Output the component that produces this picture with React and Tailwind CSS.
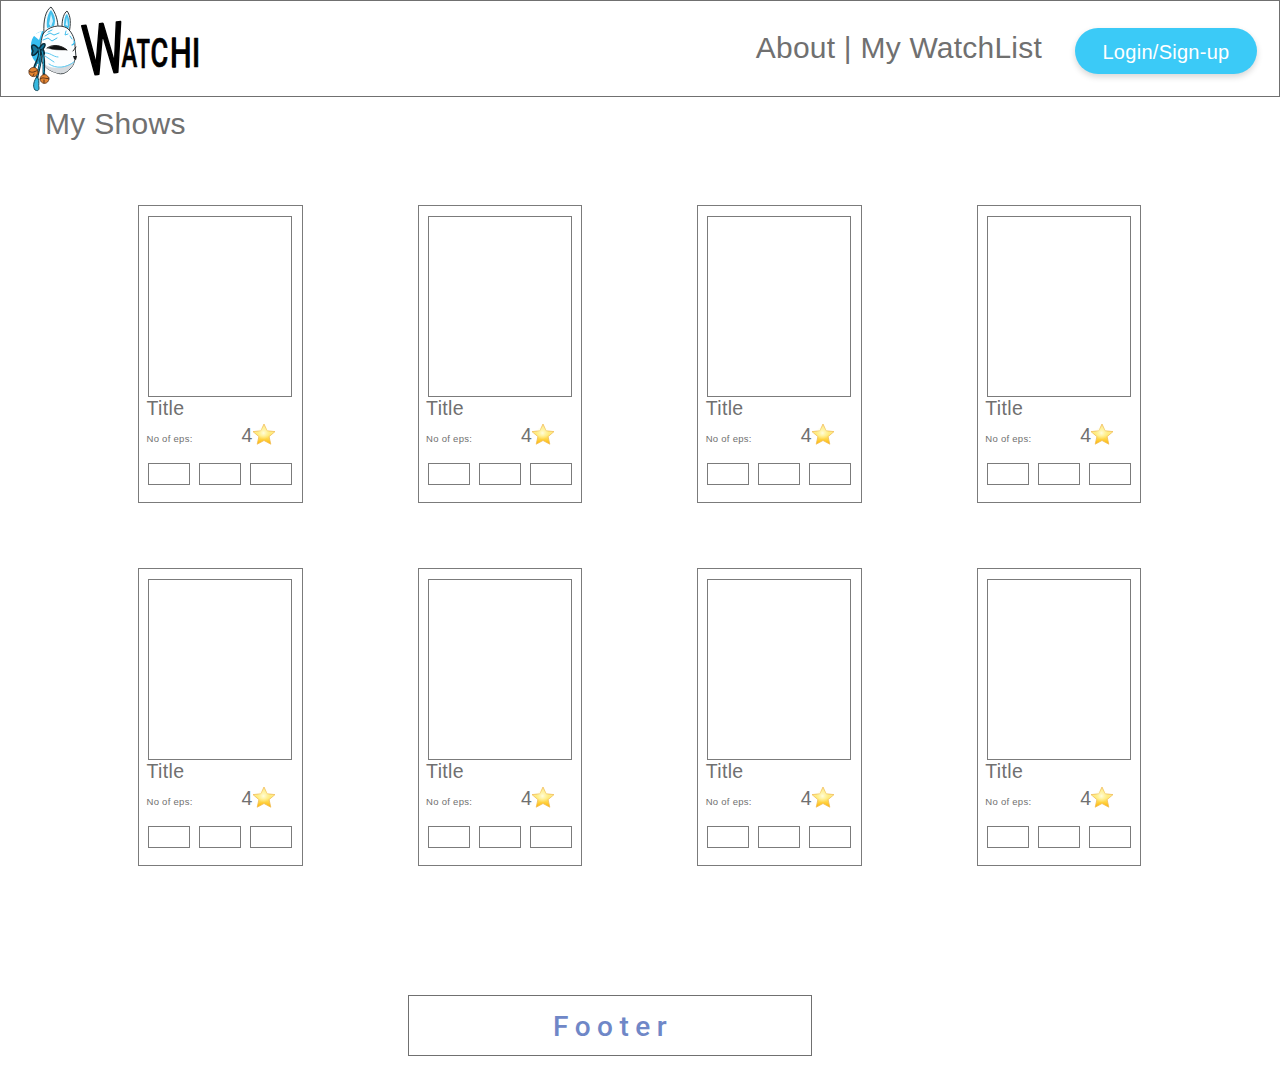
import React from "react";

function FoxMask() {
  return (
    <svg className="h-[88px] w-[52px] shrink-0" viewBox="27 5 52 88" fill="none" strokeLinecap="round" strokeLinejoin="round">
      <path d="M43 31C34 32 30 40 31 49C31 57 34 61 38 64L45 60L46 36Z" fill="#35bdf0" />
      <path d="M33 35L42 31L39 40Z" fill="#fff" />
      <path d="M44 33C43 20 46 10 51 7C56 13 58 21 58 28Z" fill="#f6fafb" stroke="#30383b" strokeWidth="1" />
      <path d="M47 28C46 20 48 13 51 10C55 15 56 21 54 26Z" fill="#43c0ec" />
      <path d="M49 24L51 14L53 21L51 27Z" fill="#d4f3ff" />
      <path d="M62 26C62 19 64 13 67 11C71 16 71 24 69 33Z" fill="#f6fafb" stroke="#30383b" strokeWidth="1" />
      <path d="M64 26C64 20 65 15 67 14C70 19 70 25 68 30Z" fill="#43c0ec" />
      <path d="M65.5 25L67 17L68 26Z" fill="#d4f3ff" />
      <path d="M43 34C48 26 60 24 67 28C73 33 75 40 75 46L76 57C74 60 75 64 70 69C66 73 62 75 57 73C50 71 45 68 42 62C40 54 40 42 43 34Z" fill="#fcfeff" stroke="#333b3f" strokeWidth="1" />
      <path d="M57 73C50 71 45 68 43 63C50 69 60 70 74 62C73 67 66 75 57 73Z" fill="#d6dade" />
      <path d="M45 36L50 33L54 35L59 33M43 40L48 38L52 41L57 38M48 32L52 30M66 31L65 35L68 34M70 36L72 39" stroke="#43bfed" strokeWidth="1" />
      <path d="M44 53C50 52 53 57 58 57M45 56L54 62M49 64C56 69 66 68 74 62" stroke="#5bc9f1" strokeWidth="1" />
      <path d="M48 48C55 44 62 46 67 50C59 50 53 50 48 48Z" fill="#111" stroke="#111" strokeWidth=".4" />
      <path d="M47 48C54 43 62 46 67 50M73 51L76 47" stroke="#151515" strokeWidth=".9" />
      <path d="M72 45C74 44 75 43 74 41" stroke="#35bdf0" strokeWidth="1.2" />
      <path d="M73 56L77 56L76 60L74 59Z" fill="#17191a" />
      <path d="M39 49C33 42 30 45 33 51C30 57 34 57 39 50C43 58 46 55 43 49C48 43 43 41 39 49Z" fill="#14769b" stroke="#092a38" strokeWidth="1.5" />
      <path d="M39 49C41 57 36 61 34 69M41 50C46 57 43 67 44 76M40 53C42 63 38 70 37 78" stroke="#092f40" strokeWidth="2.5" />
      <path d="M39 49C41 57 37 62 35 68M42 51C45 60 42 66 44 73M40 56C41 65 38 70 37 76" stroke="#23a5cc" strokeWidth="1" />
      <path d="M36 78C33 83 33 87 35 90C37 91 39 91 39 88C38 85 40 82 38 78Z" fill="#35b8df" stroke="#174a5b" strokeWidth="1" />
      <circle cx="33.5" cy="72" r="4.6" fill="#e38431" stroke="#583118" strokeWidth=".8" />
      <path d="M29 71C32 74 36 71 38 70M34 74L33 76" stroke="#5b3319" strokeWidth="1" />
      <circle cx="44.5" cy="79" r="4.4" fill="#e38431" stroke="#583118" strokeWidth=".8" />
      <path d="M40 79C43 76 46 80 49 78M44 80L44 83" stroke="#5b3319" strokeWidth="1" />
    </svg>
  );
}

function Wordmark() {
  return (
    <svg className="-ml-[3px] h-[94px] w-[130px] shrink-0" viewBox="76 2 130 94" role="img" aria-label="Watchi">
      <g fill="#000" stroke="#000" fontFamily="Roboto, sans-serif" strokeLinejoin="round">
        <text transform="translate(85.5 75.5) rotate(-6) scale(.67 1)" fontSize="70" fontWeight="400" strokeWidth="2">W</text>
        <g fontSize="41" fontWeight="500" strokeWidth=".7">
          <text transform="translate(121.5 67) scale(.58 1)">A</text>
          <text transform="translate(136.5 68) scale(.54 1)">T</text>
          <text transform="translate(150.5 66.5) scale(.66 1)">C</text>
          <text transform="translate(170 67) scale(.74 1)" fontWeight="400" strokeWidth="1.6">H</text>
          <text transform="translate(192 67) scale(.7 1)">I</text>
        </g>
      </g>
    </svg>
  );
}

function Star() {
  return (
    <svg className="h-[22px] w-[24px] shrink-0" viewBox="0 0 24 22">
      <defs>
        <linearGradient id="star-fill" x1="0" y1="0" x2="0" y2="1">
          <stop stopColor="#fff0a0" />
          <stop offset=".55" stopColor="#ffeb79" />
          <stop offset="1" stopColor="#ffb500" />
        </linearGradient>
        <radialGradient id="star-glow">
          <stop stopColor="#fffde0" />
          <stop offset="1" stopColor="#fff6a8" stopOpacity="0" />
        </radialGradient>
      </defs>
      <path d="M12 1L15.1 7.8L23 8.6L17.1 13.6L18.8 21.2L12 17.5L5.2 21.2L6.9 13.6L1 8.6L8.9 7.8Z" fill="url(#star-fill)" stroke="#f0bd57" strokeWidth=".8" strokeLinejoin="round" />
      <circle cx="11.5" cy="10" r="6.5" fill="url(#star-glow)" />
    </svg>
  );
}

function ShowCard() {
  return (
    <article className="h-[298px] w-[164.6px] border border-[#7b7b7b] pt-[10px] pl-[9px]">
      <div className="h-[181px] w-[144px] border border-[#7b7b7b]" />
      <h2 className="-mt-px -ml-[1.5px] h-[24px] text-[19.5px] leading-[24px] tracking-[0.35px]">Title</h2>
      <div className="-ml-[1.5px] flex h-[32px] w-[144px]">
        <span className="w-[95px] pt-[12px] text-[9.5px] leading-[14px] tracking-[0.28px]">No of eps:</span>
        <span className="w-[10px] pt-[3px] text-[19.5px] leading-[24px]">4</span>
        <span className="pt-[3px]"><Star /></span>
      </div>
      <div className="mt-[11px] flex w-[144px] justify-between">
        <div className="h-[22px] w-[42px] border border-[#7b7b7b]" />
        <div className="h-[22px] w-[42px] border border-[#7b7b7b]" />
        <div className="h-[22px] w-[42px] border border-[#7b7b7b]" />
      </div>
    </article>
  );
}

export default function App() {
  return (
    <div className="h-[1080px] w-[1280px] overflow-hidden bg-white font-['Liberation_Sans',Arial,sans-serif] text-[#707070]">
      <header className="flex h-[97px] border border-[#707070]">
        <div className="ml-[26px] flex w-[200px] items-start">
          <div className="pt-[4px]"><FoxMask /></div>
          <div className="pt-px"><Wordmark /></div>
        </div>
        <nav className="ml-auto flex pt-[29px] text-[30px] leading-[36px] tracking-[0.22px] whitespace-pre"><a>About</a><span> | </span><a>My WatchList</a></nav>
        <button className="mt-[27px] mr-[22px] ml-[33px] h-[46px] w-[182px] rounded-full bg-[#3bcaf7] pt-[2px] text-[20px] tracking-[0.28px] text-white shadow-[0_3px_6px_rgba(0,0,0,0.16)]">Login/Sign-up</button>
      </header>
      <main>
        <h1 className="ml-[45px] h-[108px] pt-[9px] text-[30px] leading-[36px] tracking-[0.3px]">My Shows</h1>
        <section className="ml-[138px] grid grid-cols-[repeat(4,164.6px)] gap-x-[115px] gap-y-[65px]">
          {Array.from({ length: 8 }, (_, i) => <ShowCard key={i} />)}
        </section>
      </main>
      <footer className="mt-[129px] ml-[408px] flex h-[61px] w-[404px] items-center border border-[#707070] pt-[2px] pl-[144px] font-[Roboto,sans-serif] text-[28px] font-medium tracking-[6.5px] text-[#6f87c7]">Footer</footer>
    </div>
  );
}
